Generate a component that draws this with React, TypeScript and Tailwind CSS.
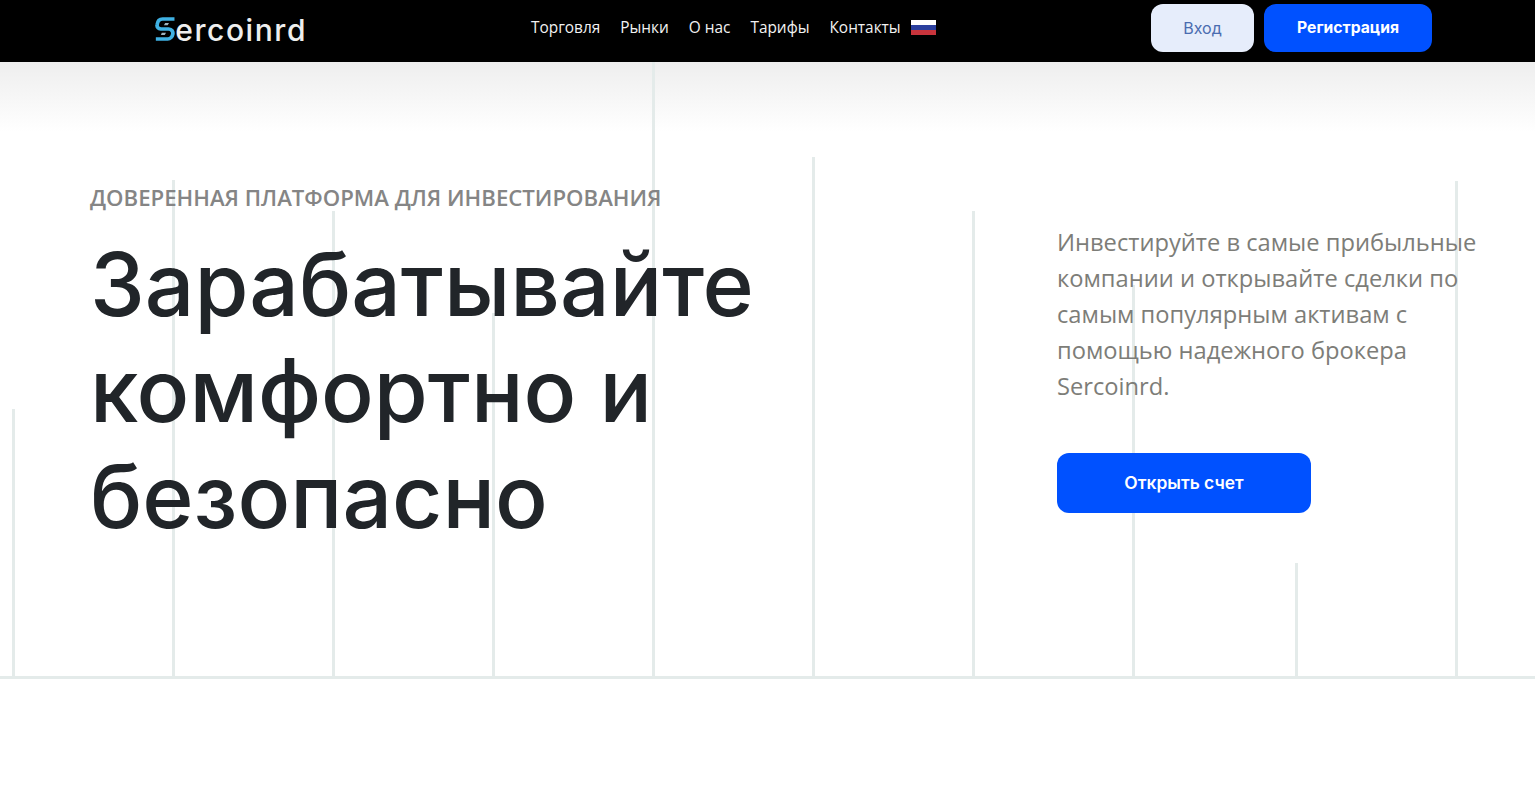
const navLinks = ['Торговля', 'Рынки', 'О нас', 'Тарифы', 'Контакты'];

// decorative chart lines behind the hero
const chartLines = [
  { left: 12, top: 409 },
  { left: 172, top: 180 },
  { left: 332, top: 211 },
  { left: 492, top: 313 },
  { left: 652, top: 62 },
  { left: 812, top: 157 },
  { left: 972, top: 211 },
  { left: 1132, top: 285 },
  { left: 1295, top: 563 },
  { left: 1455, top: 181 },
];

const Logo = () => (
  <div className="flex w-[152px] items-center pt-[4px]">
    <svg width="24" height="28" viewBox="0 0 24 28" fill="none" className="-translate-y-[1px]">
      <path
        d="M23 2.200H9C5.500 2.200 3 5 2.500 9C2 12 4 13.500 7 14H16C20 14.500 21.500 17 21 20C20.500 23 18 25.800 15 25.800H1"
        stroke="#3fb1e3"
        strokeWidth="4.400"
      />
      <path d="M12 7H16.500L15 9.500H10.500Z" fill="#9fb4bf" />
      <path d="M8 18.500H13L11.500 21H7Z" fill="#9fb4bf" />
    </svg>
    <span className="font-['Inter'] text-[30px] font-medium leading-none tracking-[1.550px] text-[#eeeeee]">
      ercoinrd
    </span>
  </div>
);

export default function App() {
  return (
    <div className="relative h-[796px] overflow-hidden bg-white font-['Inter',sans-serif]">
      <div className="absolute inset-x-0 top-[62px] h-[70px] bg-gradient-to-b from-[#eeeeee] to-white" />
      {chartLines.map((line) => (
        <div
          key={line.left}
          className="absolute w-[3px] bg-[#e4ebea]"
          style={{ left: line.left, top: line.top, height: 677 - line.top }}
        />
      ))}
      <div className="absolute inset-x-0 top-[676px] h-[3px] bg-[#e4ebea]" />

      <header className="relative flex h-[62px] items-center bg-black pb-[6px] pl-[155px] pr-[103px]">
        <Logo />
        <nav className="ml-[224px] flex items-center gap-5 font-['Open_Sans'] text-[15.4px] text-[#f2f2f2]">
          {navLinks.map((link) => (
            <a key={link}>{link}</a>
          ))}
          <div className="-ml-[10px] flex h-[15px] w-[25px] flex-col">
            <div className="flex-1 bg-white" />
            <div className="flex-1 bg-[#2a3f9e]" />
            <div className="flex-1 bg-[#c8343c]" />
          </div>
        </nav>
        <div className="ml-auto flex items-center gap-[10px]">
          <button className="h-[48px] w-[103px] rounded-xl bg-[#e6edfb] text-base text-[#4a6cb0]">Вход</button>
          <button className="h-[48px] w-[168px] rounded-xl bg-[#0051ff] text-[15.7px] font-bold text-white">Регистрация</button>
        </div>
      </header>

      <main className="relative flex pl-[90px] pt-[120px]">
        <div className="w-[967px]">
          <p className="font-['Open_Sans'] text-[22.2px] font-semibold leading-[32px] text-[#858585]">
            ДОВЕРЕННАЯ ПЛАТФОРМА ДЛЯ ИНВЕСТИРОВАНИЯ
          </p>
          <h1 className="mt-[17px] font-['Inter'] text-[87.4px] font-medium leading-[106px] text-[#212529]">
            Зарабатывайте<br />комфортно и<br />безопасно
          </h1>
        </div>
        <div className="pt-[42px]">
          <p className="w-[430px] font-['Open_Sans'] text-[23.7px] leading-[36px] text-[#7d7d78]">
            Инвестируйте в самые прибыльные компании и открывайте сделки по самым популярным активам с помощью надежного брокера Sercoinrd.
          </p>
          <button className="mt-[49px] h-[60px] w-[254px] rounded-xl bg-[#0051ff] text-[17.4px] font-semibold text-white">
            Открыть счет
          </button>
        </div>
      </main>
    </div>
  );
}
